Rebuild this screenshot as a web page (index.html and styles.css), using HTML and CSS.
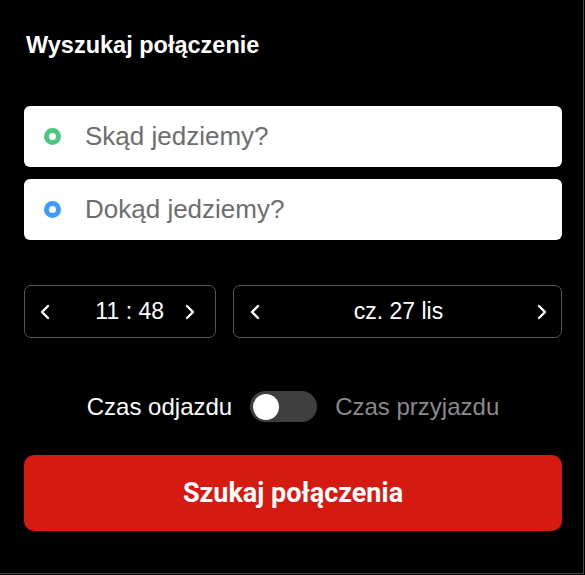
FILE: index.html
```html
<!DOCTYPE html>
<html lang="pl">
<head>
    <meta charset="UTF-8">
    <meta name="viewport" content="width=device-width, initial-scale=1.0">
    <title>Wyszukaj połączenie</title>
    <link rel="stylesheet" href="styles.css">
</head>
<body>
    <div class="search-panel">
        <h1 class="panel-title">Wyszukaj połączenie</h1>

        <div class="stations">
            <label class="station-field">
                <span class="station-dot dot-from"></span>
                <input type="text" class="station-input" placeholder="Skąd jedziemy?">
            </label>
            <label class="station-field">
                <span class="station-dot dot-to"></span>
                <input type="text" class="station-input" placeholder="Dokąd jedziemy?">
            </label>
        </div>

        <div class="when-row">
            <div class="stepper stepper-time">
                <button class="step-btn" aria-label="Wcześniej">
                    <svg width="10" height="16" viewBox="0 0 10 16"><polyline points="8,2 2,8 8,14" fill="none" stroke="#fff" stroke-width="2.4" stroke-linecap="round" stroke-linejoin="round"/></svg>
                </button>
                <span class="step-value time-value">11 : 48</span>
                <button class="step-btn" aria-label="Później">
                    <svg width="10" height="16" viewBox="0 0 10 16"><polyline points="2,2 8,8 2,14" fill="none" stroke="#fff" stroke-width="2.4" stroke-linecap="round" stroke-linejoin="round"/></svg>
                </button>
            </div>
            <div class="stepper stepper-date">
                <button class="step-btn" aria-label="Poprzedni dzień">
                    <svg width="10" height="16" viewBox="0 0 10 16"><polyline points="8,2 2,8 8,14" fill="none" stroke="#fff" stroke-width="2.4" stroke-linecap="round" stroke-linejoin="round"/></svg>
                </button>
                <span class="step-value">cz. 27 lis</span>
                <button class="step-btn" aria-label="Następny dzień">
                    <svg width="10" height="16" viewBox="0 0 10 16"><polyline points="2,2 8,8 2,14" fill="none" stroke="#fff" stroke-width="2.4" stroke-linecap="round" stroke-linejoin="round"/></svg>
                </button>
            </div>
        </div>

        <div class="mode-row">
            <span class="mode-label active">Czas odjazdu</span>
            <span class="switch"><span class="switch-knob"></span></span>
            <span class="mode-label">Czas przyjazdu</span>
        </div>

        <button class="search-btn">Szukaj połączenia</button>
    </div>
</body>
</html>
```

FILE: styles.css
```css
body {
    margin: 0;
    background-color: #000;
    font-family: "Liberation Sans", Arial, sans-serif;
    color: #fff;
}

.search-panel {
    width: 584px;
    height: 574px;
    box-sizing: border-box;
    padding: 31px 21px 0 24px;
    border-right: 1px solid #4a4a4a;
    border-bottom: 1px solid #4a4a4a;
}

.panel-title {
    margin: 0 0 0 2px;
    font-size: 23.5px;
    line-height: 28px;
    font-weight: bold;
}

/* Pola stacji */
.stations {
    margin-top: 47px;
    display: flex;
    flex-direction: column;
    gap: 12px;
}

.station-field {
    display: flex;
    align-items: center;
    height: 61px;
    padding-left: 20px;
    background: #fff;
    border-radius: 6px;
}

.station-dot {
    width: 17px;
    height: 17px;
    box-sizing: border-box;
    border-radius: 50%;
    border: 5.5px solid #4cc77f;
    flex-shrink: 0;
}

.dot-to {
    border-color: #3d9bff;
}

.station-input {
    flex: 1;
    margin-left: 24px;
    border: 0;
    outline: none;
    background: transparent;
    padding: 0;
    font-family: inherit;
    font-size: 26px;
    color: #333;
}

.station-input::placeholder {
    color: #6e6e6e;
}

/* Godzina i data */
.when-row {
    margin-top: 45px;
    display: flex;
    gap: 17px;
}

.stepper {
    height: 53px;
    box-sizing: border-box;
    display: flex;
    align-items: center;
    border: 1.5px solid #555;
    border-radius: 7px;
}

.stepper-time {
    width: 192px;
    padding: 0 20px 0 15px;
}

.stepper-date {
    flex: 1;
    justify-content: space-between;
    padding: 0 14px 0 16px;
}

.step-btn {
    display: flex;
    padding: 0;
    border: 0;
    background: none;
    cursor: pointer;
}

.step-value {
    font-size: 23px;
}

.time-value {
    margin-left: auto;
    margin-right: 21px;
}

/* Przełącznik odjazd / przyjazd */
.mode-row {
    margin-top: 53px;
    display: flex;
    justify-content: center;
    align-items: center;
    gap: 18px;
}

.mode-label {
    font-size: 24px;
    color: #8a8a8a;
}

.mode-label.active {
    color: #fff;
}

.switch {
    width: 67px;
    height: 31px;
    box-sizing: border-box;
    padding: 2.5px;
    border-radius: 16px;
    background: #3f3f3f;
}

.switch-knob {
    display: block;
    width: 26px;
    height: 26px;
    border-radius: 50%;
    background: #fff;
}

.search-btn {
    display: block;
    width: 100%;
    height: 76px;
    margin-top: 33px;
    border: 0;
    border-radius: 10px;
    background-color: #d51a12;
    color: #fff;
    font-family: Roboto, "Liberation Sans", sans-serif;
    font-weight: bold;
    font-size: 27px;
    cursor: pointer;
}
```
